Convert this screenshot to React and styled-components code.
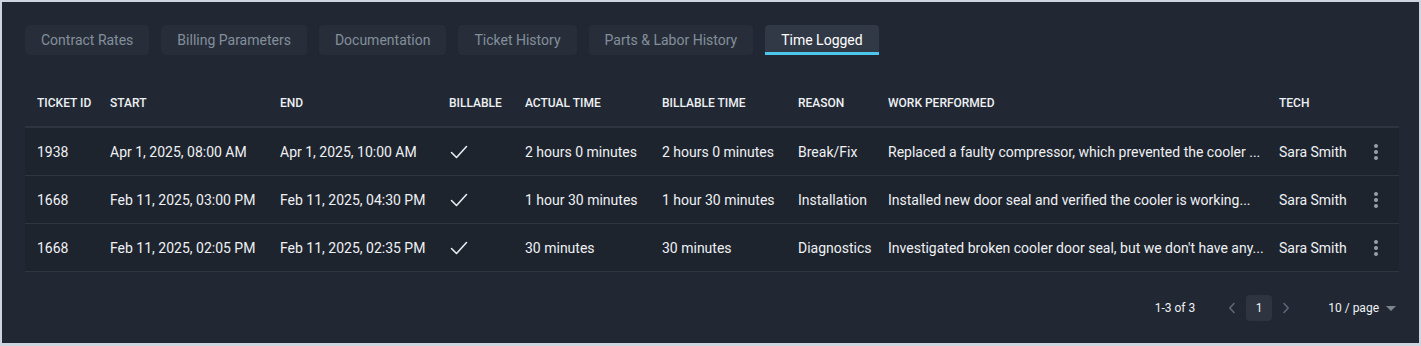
import React from 'react';
import styled, { createGlobalStyle } from 'styled-components';

const tabs = ['Contract Rates', 'Billing Parameters', 'Documentation', 'Ticket History', 'Parts & Labor History', 'Time Logged'];

const columns = [
    { key: 'id', label: 'Ticket ID', width: 73 },
    { key: 'start', label: 'Start', width: 170 },
    { key: 'end', label: 'End', width: 169 },
    { key: 'billable', label: 'Billable', width: 76 },
    { key: 'actual', label: 'Actual Time', width: 137 },
    { key: 'billTime', label: 'Billable Time', width: 136 },
    { key: 'reason', label: 'Reason', width: 90 },
    { key: 'work', label: 'Work Performed', width: 391 },
    { key: 'tech', label: 'Tech', width: 90 },
];

const rows = [
    {
        id: '1938', start: 'Apr 1, 2025, 08:00 AM', end: 'Apr 1, 2025, 10:00 AM', billable: true,
        actual: '2 hours 0 minutes', billTime: '2 hours 0 minutes', reason: 'Break/Fix',
        work: 'Replaced a faulty compressor, which prevented the cooler ...', tech: 'Sara Smith',
    },
    {
        id: '1668', start: 'Feb 11, 2025, 03:00 PM', end: 'Feb 11, 2025, 04:30 PM', billable: true,
        actual: '1 hour 30 minutes', billTime: '1 hour 30 minutes', reason: 'Installation',
        work: 'Installed new door seal and verified the cooler is working...', tech: 'Sara Smith',
    },
    {
        id: '1668', start: 'Feb 11, 2025, 02:05 PM', end: 'Feb 11, 2025, 02:35 PM', billable: true,
        actual: '30 minutes', billTime: '30 minutes', reason: 'Diagnostics',
        work: "Investigated broken cooler door seal, but we don't have any...", tech: 'Sara Smith',
    },
];

const Check = () => (
    <svg width="18" height="16" viewBox="0 0 18 16" fill="none">
        <path d="M1.5 8.5 L6.5 13.5 L16.5 2.5" stroke="#e8ebef" strokeWidth="1.6" strokeLinecap="round" strokeLinejoin="round" />
    </svg>
);

const Chevron = ({ dir }) => (
    <svg width="8" height="12" viewBox="0 0 8 12" fill="none">
        <path d={dir === 'left' ? 'M6 1.5 L1.8 6 L6 10.5' : 'M2 1.5 L6.2 6 L2 10.5'} stroke="#5f6875" strokeWidth="1.6" strokeLinecap="round" strokeLinejoin="round" />
    </svg>
);

const TimeLogged = () => {
    return <Panel>
            <Tabs>
                {tabs.map((t, ind) => <Tab key={`tab-${ind}`} active={t === 'Time Logged'}>{t}</Tab>)}
            </Tabs>
            <Table>
                <colgroup>
                    {columns.map((c) => <col key={c.key} style={{ width: c.width }} />)}
                    <col />
                </colgroup>
                <thead>
                    <tr>
                        {columns.map((c) => <Th key={c.key}>{c.label}</Th>)}
                        <Th />
                    </tr>
                </thead>
                <tbody>
                    {rows.map((r, ind) => (
                        <Tr key={`row-${ind}`}>
                            {columns.map((c) => (
                                <Td key={c.key}>
                                    {c.key === 'billable' ? (r.billable ? <Check /> : null) : r[c.key]}
                                </Td>
                            ))}
                            <Td><Kebab><i /><i /><i /></Kebab></Td>
                        </Tr>
                    ))}
                </tbody>
            </Table>
            <Pager>
                <Total>1-3 of 3</Total>
                <Nav>
                    <Arrow><Chevron dir="left" /></Arrow>
                    <PageNum>1</PageNum>
                    <Arrow><Chevron dir="right" /></Arrow>
                </Nav>
                <PageSize>10 / page<Caret /></PageSize>
            </Pager>
        </Panel>;
};

const App = () => (
    <>
        <Global />
        <TimeLogged />
    </>
);

const Global = createGlobalStyle`
body {
    margin: 0;
    background: #cdd6df;
    font-family: Roboto, "Liberation Sans", sans-serif;
}
`;
const Panel = styled.div`
margin: 2px 2px 0 2px;
height: 341px;
box-sizing: border-box;
background: #212833;
padding: 23px 20px 0 23px;
`;
const Tabs = styled.div`
display: flex;
gap: 12px;
`;
const Tab = styled.div`
height: 30px;
box-sizing: border-box;
padding: 0 16px;
display: flex;
align-items: center;
font-size: 14px;
border-radius: 4px 4px ${p => p.active ? '0 0' : '4px 4px'};
background: ${p => p.active ? '#323946' : '#272e3a'};
color: ${p => p.active ? '#ffffff' : '#848e9b'};
border-bottom: ${p => p.active ? '3px solid #4cc6ec' : 'none'};
padding-top: ${p => p.active ? '3px' : '0'};
`;
const Table = styled.table`
margin-top: 25px;
width: 100%;
table-layout: fixed;
border-collapse: collapse;
`;
const Th = styled.th`
height: 46px;
padding: 0 12px;
text-align: left;
white-space: nowrap;
font-size: 12px;
font-weight: 500;
text-transform: uppercase;
color: #eef1f4;
border-bottom: 2px solid #2e3541;
`;
const Tr = styled.tr`
background: #1e242e;
border-bottom: 1px solid #2e3541;
`;
const Td = styled.td`
height: 47px;
padding: 0 12px;
font-size: 14px;
color: #eef1f4;
white-space: nowrap;
svg { display: block; margin-left: 1px; }
`;
const Kebab = styled.div`
display: flex;
flex-direction: column;
align-items: center;
gap: 2px;
margin-left: 2px;
width: 10px;
i {
    width: 4px;
    height: 4px;
    border-radius: 50%;
    background: #9aa1aa;
}
`;
const Pager = styled.div`
margin-top: 23px;
display: flex;
justify-content: flex-end;
align-items: center;
font-size: 12px;
color: #eef1f4;
padding-right: 3px;
`;
const Total = styled.span`
margin-right: 33px;
`;
const Nav = styled.div`
display: flex;
align-items: center;
gap: 10px;
margin-right: 38px;
`;
const Arrow = styled.span`
width: 8px;
display: flex;
justify-content: center;
`;
const PageNum = styled.span`
width: 26px;
height: 26px;
border-radius: 4px;
background: #2e3541;
display: flex;
align-items: center;
justify-content: center;
`;
const PageSize = styled.span`
display: flex;
align-items: center;
gap: 7px;
`;
const Caret = styled.span`
width: 0;
height: 0;
border-left: 5px solid transparent;
border-right: 5px solid transparent;
border-top: 5px solid #7d8591;
`;

export default App;
